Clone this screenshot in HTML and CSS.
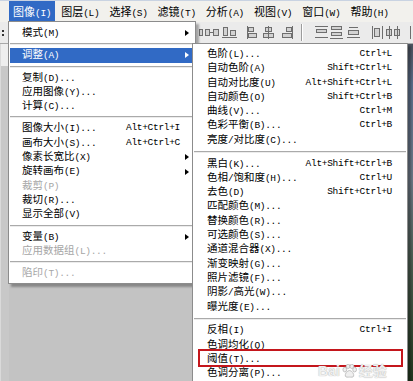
FILE: index.html
```html
<!DOCTYPE html>
<html lang="zh-CN">
<head>
  <meta charset="UTF-8" />
  <title>图像 - 调整</title>
  <link rel="stylesheet" href="styles.css">
</head>
<body>
<div class="app">

  <div class="menubar">
    <span class="open">图像<span class="m">(I)</span></span>
    <span>图层<span class="m">(L)</span></span>
    <span>选择<span class="m">(S)</span></span>
    <span>滤镜<span class="m">(T)</span></span>
    <span>分析<span class="m">(A)</span></span>
    <span>视图<span class="m">(V)</span></span>
    <span>窗口<span class="m">(W)</span></span>
    <span>帮助<span class="m">(H)</span></span>
  </div>

  <div class="options">
    <svg class="align-icons" width="413" height="21" viewBox="0 0 413 21">
      <g fill="#333">
        <rect x="2" y="8" width="2" height="2"/>
        <rect x="2" y="12" width="2" height="2"/>
      </g>
      <g fill="#d2d2d2" stroke="#6e6e6e" stroke-width="1">
        <rect x="199.5" y="7.5" width="3" height="6"/>
        <rect x="205.5" y="7.5" width="4" height="6"/>
        <rect x="213.5" y="7.5" width="5" height="6"/>
        <rect x="223.5" y="5.5" width="4" height="8"/>
        <rect x="230.5" y="8.5" width="5" height="5"/>
        <rect x="248.5" y="5.5" width="5" height="4"/>
        <rect x="248.5" y="11.5" width="8" height="4"/>
        <rect x="265.5" y="5.5" width="6" height="4"/>
        <rect x="263.5" y="11.5" width="10" height="4"/>
        <rect x="286.5" y="5.5" width="5" height="4"/>
        <rect x="282.5" y="11.5" width="9" height="4"/>
        <rect x="316.5" y="7.5" width="10" height="3"/>
        <rect x="331.5" y="4.5" width="10" height="3"/>
        <rect x="331.5" y="10.5" width="10" height="3"/>
        <rect x="348.5" y="8.5" width="10" height="4"/>
        <rect x="374.5" y="6.5" width="5" height="8"/>
        <rect x="386.5" y="7.5" width="5" height="6"/>
        <rect x="394.5" y="7.5" width="5" height="6"/>
      </g>
      <g stroke="#6e6e6e" stroke-width="1">
        <line x1="209" y1="10.5" x2="213" y2="10.5"/>
        <line x1="222" y1="15.5" x2="237" y2="15.5"/>
        <line x1="247.5" y1="4" x2="247.5" y2="17"/>
        <line x1="268.5" y1="4" x2="268.5" y2="17"/>
        <line x1="292.5" y1="4" x2="292.5" y2="17"/>
        <line x1="315" y1="4.5" x2="328" y2="4.5"/>
        <line x1="315" y1="15.5" x2="328" y2="15.5"/>
        <line x1="330" y1="16.5" x2="343" y2="16.5"/>
        <line x1="349" y1="5.5" x2="358" y2="5.5"/>
        <line x1="347" y1="15.5" x2="360" y2="15.5"/>
        <line x1="372.5" y1="4" x2="372.5" y2="17"/>
        <line x1="382.5" y1="4" x2="382.5" y2="17"/>
        <line x1="389.5" y1="4" x2="389.5" y2="17"/>
        <line x1="397.5" y1="4" x2="397.5" y2="17"/>
        <line x1="410.5" y1="4" x2="410.5" y2="17"/>
      </g>
      <line x1="301.5" y1="2" x2="301.5" y2="19" stroke="#9c9c9c"/>
      <line x1="302.5" y1="2" x2="302.5" y2="19" stroke="#fff"/>
    </svg>
  </div>

  <div class="workspace">
    <div class="edge"></div>
    <div class="canvas"></div>
    <div class="photo"></div>
  </div>

  <!-- 图像 menu -->
  <div class="menu main-menu">
    <div class="item"><span class="label">模式<span class="m">(M)</span></span><i class="arrow"></i></div>
    <div class="sep"></div>
    <div class="item hl"><span class="label">调整<span class="m">(A)</span></span><i class="arrow"></i></div>
    <div class="sep"></div>
    <div class="item"><span class="label">复制<span class="m">(D)...</span></span></div>
    <div class="item"><span class="label">应用图像<span class="m">(Y)...</span></span></div>
    <div class="item"><span class="label">计算<span class="m">(C)...</span></span></div>
    <div class="sep"></div>
    <div class="item"><span class="label">图像大小<span class="m">(I)...</span></span><span class="key">Alt+Ctrl+I</span></div>
    <div class="item"><span class="label">画布大小<span class="m">(S)...</span></span><span class="key">Alt+Ctrl+C</span></div>
    <div class="item"><span class="label">像素长宽比<span class="m">(X)</span></span><i class="arrow"></i></div>
    <div class="item"><span class="label">旋转画布<span class="m">(E)</span></span><i class="arrow"></i></div>
    <div class="item off"><span class="label">裁剪<span class="m">(P)</span></span></div>
    <div class="item"><span class="label">裁切<span class="m">(R)...</span></span></div>
    <div class="item"><span class="label">显示全部<span class="m">(V)</span></span></div>
    <div class="sep"></div>
    <div class="item"><span class="label">变量<span class="m">(B)</span></span><i class="arrow"></i></div>
    <div class="item off"><span class="label">应用数据组<span class="m">(L)...</span></span></div>
    <div class="sep"></div>
    <div class="item off"><span class="label">陷印<span class="m">(T)...</span></span></div>
  </div>

  <!-- 调整 submenu -->
  <div class="menu sub-menu">
    <div class="item"><span class="label">色阶<span class="m">(L)...</span></span><span class="key">Ctrl+L</span></div>
    <div class="item"><span class="label">自动色阶<span class="m">(A)</span></span><span class="key">Shift+Ctrl+L</span></div>
    <div class="item"><span class="label">自动对比度<span class="m">(U)</span></span><span class="key">Alt+Shift+Ctrl+L</span></div>
    <div class="item"><span class="label">自动颜色<span class="m">(O)</span></span><span class="key">Shift+Ctrl+B</span></div>
    <div class="item"><span class="label">曲线<span class="m">(V)...</span></span><span class="key">Ctrl+M</span></div>
    <div class="item"><span class="label">色彩平衡<span class="m">(B)...</span></span><span class="key">Ctrl+B</span></div>
    <div class="item"><span class="label">亮度<span class="m">/</span>对比度<span class="m">(C)...</span></span></div>
    <div class="sep"></div>
    <div class="item"><span class="label">黑白<span class="m">(K)...</span></span><span class="key">Alt+Shift+Ctrl+B</span></div>
    <div class="item"><span class="label">色相<span class="m">/</span>饱和度<span class="m">(H)...</span></span><span class="key">Ctrl+U</span></div>
    <div class="item"><span class="label">去色<span class="m">(D)</span></span><span class="key">Shift+Ctrl+U</span></div>
    <div class="item"><span class="label">匹配颜色<span class="m">(M)...</span></span></div>
    <div class="item"><span class="label">替换颜色<span class="m">(R)...</span></span></div>
    <div class="item"><span class="label">可选颜色<span class="m">(S)...</span></span></div>
    <div class="item"><span class="label">通道混合器<span class="m">(X)...</span></span></div>
    <div class="item"><span class="label">渐变映射<span class="m">(G)...</span></span></div>
    <div class="item"><span class="label">照片滤镜<span class="m">(F)...</span></span></div>
    <div class="item"><span class="label">阴影<span class="m">/</span>高光<span class="m">(W)...</span></span></div>
    <div class="item"><span class="label">曝光度<span class="m">(E)...</span></span></div>
    <div class="sep"></div>
    <div class="item"><span class="label">反相<span class="m">(I)</span></span><span class="key">Ctrl+I</span></div>
    <div class="item"><span class="label">色调均化<span class="m">(Q)</span></span></div>
    <div class="item marked"><span class="label">阈值<span class="m">(T)...</span></span></div>
    <div class="item"><span class="label">色调分离<span class="m">(P)...</span></span></div>
  </div>

  <div class="watermark">Bai<svg class="paw" width="15" height="14" viewBox="0 0 16 15">
      <g fill="#efefef" stroke="#bdbdbd" stroke-width="1">
        <ellipse cx="3" cy="6" rx="2" ry="2.5"/>
        <ellipse cx="6.5" cy="2.5" rx="2" ry="2.3"/>
        <ellipse cx="10.5" cy="2.5" rx="2" ry="2.3"/>
        <ellipse cx="13.5" cy="6" rx="2" ry="2.5"/>
        <path d="M8 7c-3 0-5 4-4.5 6 .5 1.5 3 1 4.5 1s4 .5 4.5-1c.5-2-1.5-6-4.5-6z"/>
      </g>
    </svg>经验</div>

</div>
</body>
</html>
```

FILE: styles.css
```css
body {
  margin: 0;
  font-family: "Noto Sans CJK SC", "Liberation Mono", sans-serif;
  font-size: 10.5px;
  color: #000;
}
.m,
.key {
  font-family: "Liberation Mono", monospace;
  font-size: 9.5px;
  letter-spacing: -0.3px;
}
.app {
  position: relative;
  width: 413px;
  height: 381px;
  overflow: hidden;
  display: flex;
  flex-direction: column;
  background: #c3c3c3;
}
.menubar {
  height: 22px;
  box-sizing: border-box;
  display: flex;
  gap: 2px;
  padding-left: 9px;
  background: #f2f1ed;
  border-top: 1px solid #c9d3e2;
}
.menubar > span {
  padding: 0 4px;
  line-height: 21px;
  font-size: 11px;
}
.menubar .open {
  background: #316ac5;
  color: #fff;
}
.options {
  height: 22px;
  box-sizing: border-box;
  background: #ebebeb;
  border-bottom: 1px solid #a8a8a8;
}
.align-icons {
  display: block;
}
.workspace {
  flex: 1;
  display: flex;
}
.edge {
  width: 8px;
  background: linear-gradient(#eeeeee 22px, #c8c8c8 22px);
  border-left: 1px solid #dadada;
}
.canvas {
  flex: 1;
}
.photo {
  width: 5px;
  background: linear-gradient(#4c525e, #5b6e8a 12%, #6c7785 40%, #4b5c50 65%, #22381f);
}

/* menus */
.menu {
  position: absolute;
  box-sizing: border-box;
  background: #fff;
  border: 1px solid #8c8c8c;
  box-shadow: 3px 3px 2px rgba(0, 0, 0, 0.3);
}
.main-menu {
  left: 8px;
  top: 21px;
  width: 188px;
  padding: 4px 1px 3px;
}
.sub-menu {
  left: 192px;
  top: 43px;
  width: 216px;
  padding: 3px 1px;
}
.item {
  display: flex;
  align-items: center;
  height: 14.3px;
  line-height: 14.3px;
  padding: 0 4px 0 12px;
  white-space: nowrap;
}
.sub-menu .item {
  padding-left: 13px;
}
.label {
  flex: 1;
}
.key {
  margin-right: 10px;
}
.arrow {
  width: 0;
  height: 0;
  margin-right: 1px;
  border-left: 4px solid #000;
  border-top: 3.5px solid transparent;
  border-bottom: 3.5px solid transparent;
}
.item.hl {
  background: #316ac5;
  color: #fff;
}
.item.hl .arrow {
  border-left-color: #fff;
}
.item.off {
  color: #a6a6a6;
}
.sep {
  height: 8px;
  display: flex;
  align-items: center;
}
.sub-menu .sep {
  height: 9.5px;
}
.sep::before {
  content: "";
  flex: 1;
  height: 1px;
  background: #aaaaaa;
  border-bottom: 1px solid #ececec;
}
.item.marked {
  position: relative;
}
.item.marked::after {
  content: "";
  position: absolute;
  top: -3px;
  bottom: -1px;
  left: 4px;
  right: 3px;
  border: 2px solid #c4161c;
}

.watermark {
  position: absolute;
  left: 318px;
  top: 362px;
  display: flex;
  align-items: center;
  height: 18px;
  font-family: "Liberation Sans", "Noto Sans CJK SC", sans-serif;
  font-size: 14px;
  line-height: 18px;
  font-weight: bold;
  color: #f0f0f0;
  text-shadow: 0 0 1px #9a9a9a;
}
.paw {
  margin: 0 2px;
}
```
